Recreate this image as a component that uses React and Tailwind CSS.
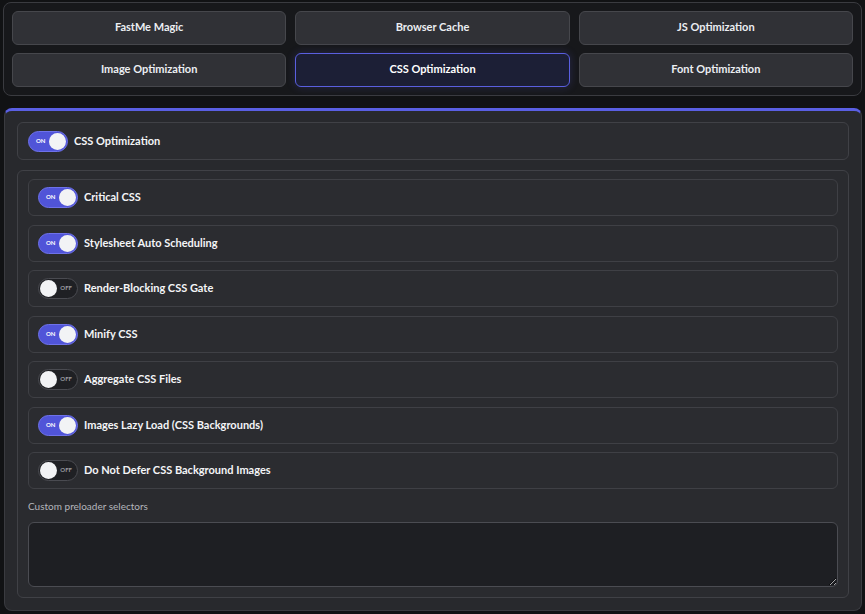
import React from 'react';

const tabs = [
  'FastMe Magic',
  'Browser Cache',
  'JS Optimization',
  'Image Optimization',
  'CSS Optimization',
  'Font Optimization',
];

const options = [
  { label: 'Critical CSS', on: true },
  { label: 'Stylesheet Auto Scheduling', on: true },
  { label: 'Render-Blocking CSS Gate', on: false },
  { label: 'Minify CSS', on: true },
  { label: 'Aggregate CSS Files', on: false },
  { label: 'Images Lazy Load (CSS Backgrounds)', on: true },
  { label: 'Do Not Defer CSS Background Images', on: false },
];

const Toggle = ({ on }) => {
  if (on) {
    return (
      <div className="relative w-[40px] h-[21px] shrink-0 rounded-full bg-[#5054d8] border border-[#6e72ea]">
        <span className="absolute left-[7px] top-[5px] text-[6px] leading-[8px] font-bold text-white">ON</span>
        <span className="absolute right-[1px] top-[1px] w-[17px] h-[17px] rounded-full bg-[#f2f3f5]" />
      </div>
    );
  }
  return (
    <div className="relative w-[40px] h-[21px] shrink-0 rounded-full bg-[#1f2024] border border-[#4a4b51]">
      <span className="absolute right-[5px] top-[5px] text-[6px] leading-[8px] font-bold text-[#9a9ba1]">OFF</span>
      <span className="absolute left-[1px] top-[1px] w-[17px] h-[17px] rounded-full bg-[#f2f3f5]" />
    </div>
  );
};

const OptionRow = ({ label, on }) => (
  <div className="flex items-center gap-[6px] h-[37px] px-[9px] rounded-[6px] bg-[#2b2c30] border border-[#3f4045]">
    <Toggle on={on} />
    <span className="text-[11px] font-bold text-[#f4f5f7]">{label}</span>
  </div>
);

export default function App() {
  const active = 'CSS Optimization';
  return (
    <div
      className="min-h-screen bg-[#111214] pt-[2px] px-[3px] pb-[2px]"
      style={{ fontFamily: 'Lato, "Noto Sans", sans-serif' }}
    >
      <div className="rounded-[8px] bg-[#17181b] border border-[#3a3b40] p-[8px]">
        <div className="grid grid-cols-3 gap-x-[9px] gap-y-[8px]">
          {tabs.map((t) => (
            <button
              key={t}
              className={
                t === active
                  ? 'h-[34px] pb-[1px] rounded-[6px] bg-[#1c1f36] border border-[#5a5fe0] text-[11px] font-bold text-white shadow-[0_0_8px_rgba(90,95,224,0.25)]'
                  : 'h-[34px] pb-[1px] rounded-[6px] bg-[#303136] border border-[#46474c] text-[11px] font-bold text-[#eceef2]'
              }
            >
              {t}
            </button>
          ))}
        </div>
      </div>

      <div className="mt-[12px] ml-[1px] rounded-[8px] bg-[#28292d] border border-[#3a3b40] border-t-[3px] border-t-[#5a5fe3] px-[12px] pt-[11px] pb-[12px]">
        <div className="flex items-center gap-[6px] h-[38px] px-[10px] rounded-[6px] bg-[#2b2c30] border border-[#404146]">
          <Toggle on />
          <span className="text-[11px] font-bold text-[#f4f5f7]">CSS Optimization</span>
        </div>

        <div className="mt-[10px] rounded-[6px] bg-[#2a2b2f] border border-[#404146] px-[10px] pt-[8px] pb-[10px]">
          <div className="flex flex-col gap-[8.5px]">
            {options.map((o) => (
              <OptionRow key={o.label} label={o.label} on={o.on} />
            ))}
          </div>
          <div className="mt-[10px] text-[10px] text-[#b4b6bc]">Custom preloader selectors</div>
          <textarea className="mt-[8px] block w-full h-[65px] rounded-[6px] bg-[#1e1f23] border border-[#4b4c52] outline-none text-[12px] text-white p-2" />
        </div>
      </div>
    </div>
  );
}
